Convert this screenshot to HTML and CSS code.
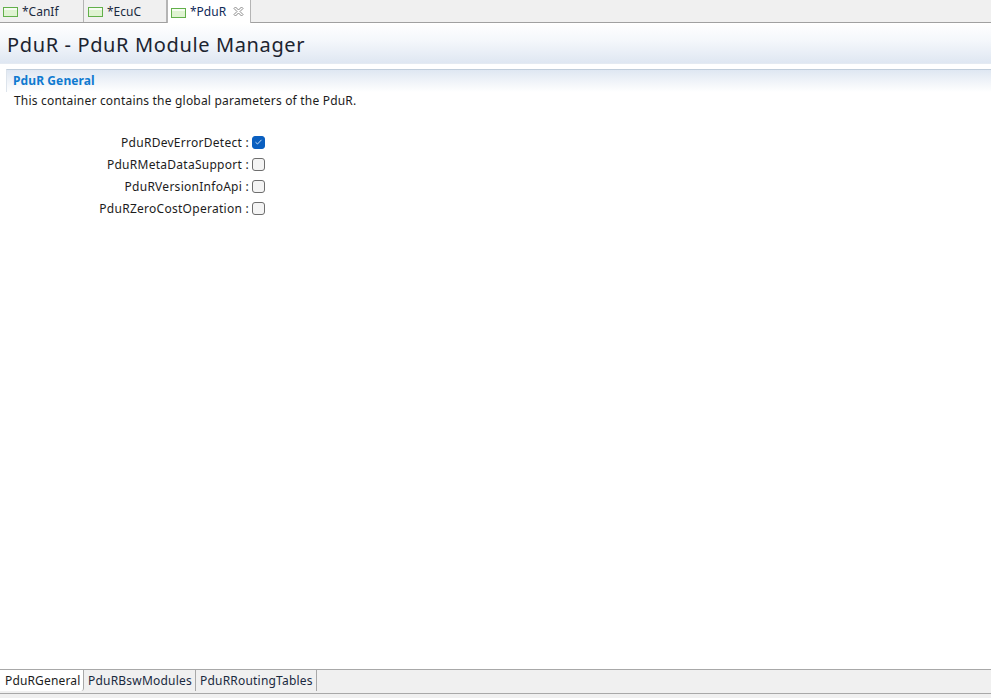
FILE: index.html
```html
<!DOCTYPE html>
<html>
<head>
<meta charset="utf-8">
<title>PduR</title>
<link rel="stylesheet" href="styles.css">
</head>
<body>
<div class="page">
  <nav class="tabs">
    <div class="tab"><svg class="ficon" width="17" height="10" viewBox="0 0 17 10"><rect x="0.5" y="0.5" width="14" height="9" fill="#dff3d2" stroke="#62b04a"/><rect x="1" y="1" width="13" height="2" fill="#f6fcf2"/></svg><span>*CanIf</span></div>
    <div class="tab"><svg class="ficon" width="17" height="10" viewBox="0 0 17 10"><rect x="0.5" y="0.5" width="14" height="9" fill="#dff3d2" stroke="#62b04a"/><rect x="1" y="1" width="13" height="2" fill="#f6fcf2"/></svg><span>*EcuC</span></div>
    <div class="tab tab-active"><svg class="ficon" width="17" height="10" viewBox="0 0 17 10"><rect x="0.5" y="0.5" width="14" height="9" fill="#dff3d2" stroke="#62b04a"/><rect x="1" y="1" width="13" height="2" fill="#f6fcf2"/></svg><span>*PduR</span>
      <svg class="close" width="11" height="11" viewBox="0 0 11 11"><path d="M1 2.5 L2.5 1 L5.5 4 L8.5 1 L10 2.5 L7 5.5 L10 8.5 L8.5 10 L5.5 7 L2.5 10 L1 8.5 L4 5.5 Z" fill="#fff" stroke="#8a8a8a" stroke-width="1"/></svg>
    </div>
  </nav>
  <header class="form-head"><h1>PduR - PduR Module Manager</h1></header>
  <main class="content">
    <section class="section">
      <h2>PduR General</h2>
      <p class="desc">This container contains the global parameters of the PduR.</p>
      <div class="params">
        <label class="param"><span class="plabel">PduRDevErrorDetect :</span><span class="check checked"><svg width="9" height="8" viewBox="0 0 9 8"><path d="M1.5 4.2 L3.5 6 L7.5 1.8" fill="none" stroke="#c4dcf4" stroke-width="1"/></svg></span></label>
        <label class="param"><span class="plabel">PduRMetaDataSupport :</span><span class="check"></span></label>
        <label class="param"><span class="plabel">PduRVersionInfoApi :</span><span class="check"></span></label>
        <label class="param"><span class="plabel">PduRZeroCostOperation :</span><span class="check"></span></label>
      </div>
    </section>
  </main>
  <footer class="bottom">
    <div class="btabs">
      <div class="btab btab-active">PduRGeneral</div>
      <div class="btab btab-modules">PduRBswModules</div>
      <div class="btab btab-routing">PduRRoutingTables</div>
    </div>
  </footer>
</div>
</body>
</html>
```
FILE: styles.css
```css
* { box-sizing: border-box; }
html, body { margin: 0; height: 100%; }
body { font-family: "Noto Sans", "Open Sans", sans-serif; font-size: 12px; letter-spacing: 0.2px; color: #1c1c1c; background: #fff; overflow: hidden; }
.page { height: 698px; display: flex; flex-direction: column; }
.tabs { height: 23px; flex: none; display: flex; background: #f0f0f0; border-bottom: 1px solid #a0a0a0; }
.tab { width: 83px; height: 22px; display: flex; align-items: center; padding-left: 4px; border-right: 1px solid #b4b4b4; color: #1a2a40; letter-spacing: 0; }
.tab:first-child { width: 84px; padding-left: 3px; }
.tab span { margin-left: 2px; }
.ficon { margin-top: 2px; }
.tab-active { width: 84px; height: 23px; background: #fff; border-left: 1px solid #b4b4b4; border-right: 1px solid #b4b4b4; padding-left: 3px; position: relative; z-index: 1; color: #102a58; }
.close { margin-left: 7px; }
.form-head { height: 40px; flex: none; background: linear-gradient(#fff, #f4f7fb 45%, #dfe7f2); padding: 6px 0 0 7px; }
.form-head h1 { margin: 0; font-size: 20px; font-weight: 400; line-height: 32px; letter-spacing: 0.63px; color: #1c2430; }
.content { flex: 1; padding: 5px 0 0 6px; border-top: 1px solid #e4eaf2; }
.section h2 { margin: 0; height: 23px; padding: 2px 0 0 6px; font-size: 12px; line-height: 18px; font-weight: 700; letter-spacing: 0.1px; color: #0f7ad0; border-top: 1px solid #c0cddb; border-left: 1px solid #dde4ec; background: linear-gradient(#dfe7f2, #fff); }
.desc { margin: 0; padding: 0 0 0 8px; line-height: 18px; }
.params { margin-top: 23px; display: flex; flex-direction: column; gap: 4px; }
.param { display: flex; align-items: center; height: 18px; }
.plabel { width: 243px; text-align: right; letter-spacing: 0.27px; }
.check { width: 13px; height: 13px; margin-left: 3px; border: 1px solid #6e6e6e; border-radius: 3px; background: #f4f4f4; display: flex; align-items: center; justify-content: center; }
.checked { background: #0a5fc0; border-color: #0a5fc0; }
.bottom { flex: none; height: 29px; background: #f0f0f0; border-top: 1px solid #a8a8a8; }
.btabs { height: 24px; display: flex; border-bottom: 1px solid #a8a8a8; }
.btab { height: 21px; line-height: 21px; padding-left: 4px; border-right: 1px solid #a8a8a8; color: #1a2a40; }
.btab-active { width: 84px; padding-left: 5px; background: #fff; color: #1c1c1c; letter-spacing: 0.15px; border-radius: 0 0 3px 0; }
.btab-modules { width: 112px; }
.btab-routing { width: 121px; }
```
